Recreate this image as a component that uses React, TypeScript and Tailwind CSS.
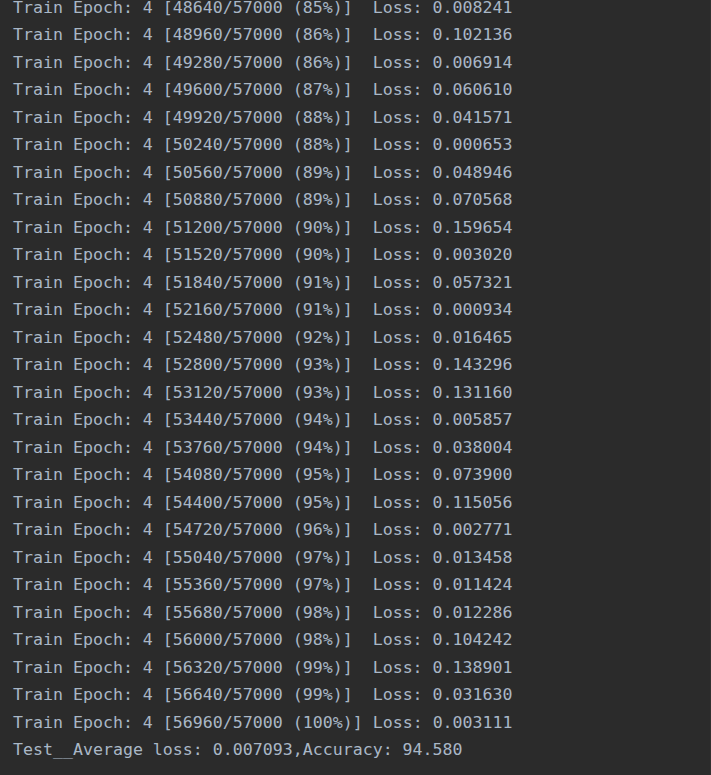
const rows: [string, string, string][] = [
  ["48640", "85", "0.008241"],
  ["48960", "86", "0.102136"],
  ["49280", "86", "0.006914"],
  ["49600", "87", "0.060610"],
  ["49920", "88", "0.041571"],
  ["50240", "88", "0.000653"],
  ["50560", "89", "0.048946"],
  ["50880", "89", "0.070568"],
  ["51200", "90", "0.159654"],
  ["51520", "90", "0.003020"],
  ["51840", "91", "0.057321"],
  ["52160", "91", "0.000934"],
  ["52480", "92", "0.016465"],
  ["52800", "93", "0.143296"],
  ["53120", "93", "0.131160"],
  ["53440", "94", "0.005857"],
  ["53760", "94", "0.038004"],
  ["54080", "95", "0.073900"],
  ["54400", "95", "0.115056"],
  ["54720", "96", "0.002771"],
  ["55040", "97", "0.013458"],
  ["55360", "97", "0.011424"],
  ["55680", "98", "0.012286"],
  ["56000", "98", "0.104242"],
  ["56320", "99", "0.138901"],
  ["56640", "99", "0.031630"],
  ["56960", "100", "0.003111"],
];

export default function App() {
  return (
    <div className="w-[711px] h-[775px] overflow-hidden bg-[#2b2b2b] border-r border-[#313131]">
      <div className="-mt-[6px] pl-[13px] font-['DejaVu_Sans_Mono','Liberation_Mono',monospace] text-[16.6px] leading-[27.48px] text-[#a9b7c6] whitespace-pre">
        {rows.map(([n, pct, loss]) => {
          const head = `Train Epoch: 4 [${n}/57000 (${pct}%)]`;
          const pad = pct.length === 3 ? " " : "  ";
          return (
            <div key={n}>
              {head}
              {pad}Loss: {loss}
            </div>
          );
        })}
        <div>Test__Average loss: 0.007093,Accuracy: 94.580</div>
      </div>
    </div>
  );
}
